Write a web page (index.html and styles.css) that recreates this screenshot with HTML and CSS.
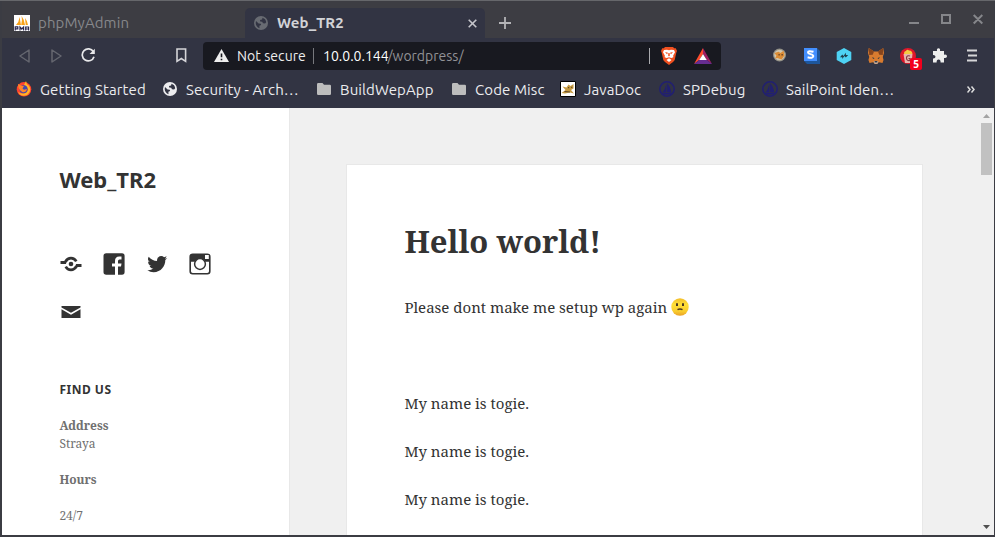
FILE: index.html
```html
<!DOCTYPE html>
<html lang="en">
<head>
<meta charset="utf-8">
<title>Web_TR2</title>
<link rel="stylesheet" href="styles.css">
</head>
<body>
<svg class="defs" width="0" height="0">
  <symbol id="globe" viewBox="0 0 14 14"><circle cx="7" cy="7" r="7" fill="currentColor"/><path class="cut" d="M2 5.1 4.6 7.6 6.8 7.7 7.1 9.1 5.4 9.8 5.5 12.2C3.4 11.6 1.7 9.5 1.7 7ZM8.5 1.8 8.1 3.5 6 4 6.2 5.6 8.2 5.7 9 7.3 11.1 7.4 12.2 6.3C12 4 10.6 2.4 8.5 1.8Z"/></symbol>
  <symbol id="folder" viewBox="0 0 14 12"><path fill="#bdbdbd" d="M1.2 0H5.5L7 1.7H12.8Q14 1.7 14 3V10.8Q14 12 12.8 12H1.2Q0 12 0 10.8V1.2Q0 0 1.2 0Z"/></symbol>
  <symbol id="sail" viewBox="0 0 16 16"><circle cx="8" cy="8" r="7.2" fill="none" stroke="#211f72" stroke-width="1.5"/><path fill="#211f72" d="M7.4 3V11.5H3.4Q6.4 8 7.4 3ZM8.2 2Q11.5 6 12.5 11.5H8.2ZM3 12H13L11.5 13.4H4.5Z"/></symbol>
</svg>
<div class="window">
  <header class="tabs">
    <div class="tab idle">
      <svg width="16" height="16" viewBox="0 0 16 16"><path fill="#fff" d="M0 0H16V16H0Z"/><path fill="#f7a11a" d="M2 10Q5 7 5.6 2L7 10ZM7.2 10Q8.5 5 7.6 1Q10.5 5 11 10ZM11 3Q13.5 6 14 10H11.7Z"/><path fill="none" stroke="#28264f" stroke-width="1.2" d="M1.2 15.5V11.8H3.8V13.8H1.2M6 15.5V12L7.8 14 9.6 12V15.5M11.7 15.5V12H14.6V15.5M11.7 14H14.6"/></svg>
      <span>phpMyAdmin</span>
    </div>
    <div class="tab active">
      <svg class="dim" width="14" height="14"><use href="#globe"/></svg>
      <span>Web_TR2</span>
      <svg class="x" width="9" height="9" viewBox="0 0 9 9"><path stroke="#c6c6cc" stroke-width="1.6" d="M.7.7 8.3 8.3M8.3.7.7 8.3"/></svg>
    </div>
    <svg class="plus" width="12" height="12" viewBox="0 0 12 12"><path stroke="#b4b4b7" stroke-width="1.8" d="M6 0V12M0 6H12"/></svg>
    <svg class="controls" width="75" height="12" viewBox="0 0 75 12"><path fill="none" stroke="#85868a" stroke-width="2" d="M0 9H10M33 1H41V9H33ZM64.7 1 73.3 9.5M73.3 1 64.7 9.5"/></svg>
  </header>
  <nav class="toolbar">
    <svg class="navs" width="44" height="16" viewBox="0 0 44 16"><path fill="none" stroke="#65666f" stroke-width="1.5" stroke-linejoin="round" d="M10 2V14L1 8ZM33 2V14L42 8Z"/></svg>
    <svg class="reload" width="15" height="15" viewBox="0 0 15 15"><path fill="none" stroke="#e8e8ea" stroke-width="1.7" d="M12.4 3.8A6 6 0 1 0 13 8.7"/><path fill="#e8e8ea" d="M13.8.8V6H8.6Z"/></svg>
    <svg class="mark" width="11" height="15" viewBox="0 0 11 15"><path fill="none" stroke="#d5d5d9" stroke-width="1.6" d="M1 1H9.6V13.3L5.3 10.5 1 13.3Z"/></svg>
    <div class="address">
      <svg class="warn" width="15" height="13" viewBox="0 0 15 13"><path fill="#eee" d="M7.5 0 15 13H0Z"/><path stroke="#181920" stroke-width="1.6" d="M7.5 4.5V8.3M7.5 9.7V11.3"/></svg>
      <span class="t-sec">Not secure</span><i class="bar"></i><span class="t-ip">10.0.0.144</span><span class="t-path">/wordpress/</span>
      <i class="bar far"></i>
      <svg class="brave" width="16" height="18" viewBox="0 0 16 18"><path fill="#f0501f" d="M4 0H12L13.2 1.3 14.8 1.2 16 4 15.3 5.8 13.7 13Q13.2 14.3 8 18 2.8 14.3 2.3 13L.7 5.8 0 4 1.2 1.2 2.8 1.3Z"/><path fill="#fff" d="M3 3 6 2.7 8 3.3 10 2.7 13 3 14 5.2 12.2 8.4 12.3 10.2 10.4 11 8 10.2 5.6 11 3.7 10.2 3.8 8.4 2 5.2ZM8 11.3 10.5 13 8 15 5.5 13Z"/><path fill="#f0501f" d="M4 5 7 5.7 6 7.2ZM12 5 9 5.7 10 7.2ZM7.4 6H8.6L8.9 8.6 8 9.6 7.1 8.6Z"/></svg>
      <svg class="bat" width="18" height="16" viewBox="0 0 18 16"><path fill="#ff4c2c" d="M9 0V6L5.2 12 0 16Z"/><path fill="#9e1f63" d="M9 0 18 16 12.8 12 9 6Z"/><path fill="#662d91" d="M0 16 5.2 12H12.8L18 16Z"/><path fill="#fff" d="M9 6 12.8 12H5.2Z"/></svg>
    </div>
    <div class="exts">
      <svg width="16" height="16" viewBox="0 0 16 16"><circle cx="7.5" cy="7" r="6.5" fill="#929087"/><circle cx="7.5" cy="7" r="5.3" fill="#d3c6ac"/><path fill="#db8c35" d="M2.5 5 6.5 3.8 8.5 5 11.5 2.8 12.5 7.5 9.5 11.5 5.5 10 3 10.5 4.5 7.7Z"/><path fill="#653d21" d="M6.5 6H7.7V7.4H6.5ZM9.5 6H10.8V7.4H9.5Z"/></svg>
      <svg width="16" height="16" viewBox="0 0 16 16"><path fill="#1e569b" d="M13 0 16 3V16H3L0 13Z"/><path fill="#438fff" d="M0 0H13V13H0Z"/><path fill="none" stroke="#fff" stroke-width="2" d="M9.5 3.8Q3.8 2.2 4 4.5C4 6.5 9.3 5.7 9.3 8.2Q9 10.7 3.6 9.2"/></svg>
      <svg width="16" height="16" viewBox="0 0 16 16"><path fill="#4ed2f4" d="M8 0 15.3 4V12L8 16 .7 12V4Z"/><path fill="#203d4b" d="M4 9.2 6.3 6.6 7.4 8 10 4.8 9.9 6.9H12.2L9.8 9.5 8.5 8.1 6.2 11 6.3 9.2Z"/></svg>
      <svg width="16" height="16" viewBox="0 0 17 16" preserveAspectRatio="none"><path fill="#d87b2f" d="M.8 0 6.4 3.4H10.6L16.2 0 17 5 15.7 9 16.5 12 15.4 15 11.5 14.3 10 15.8H7L5.5 14.3 1.6 15 .5 12 1.3 9 0 5Z"/><path fill="#87451d" d="M.8 0 6.4 3.4 5 6.7 1.3 7ZM16.2 0 10.6 3.4 12 6.7 15.7 7Z"/><path fill="#d5bfb2" d="M6 13H11L10 15.8H7Z"/><path fill="#303a45" d="M4.5 9 7 10.2 5.4 10.9ZM12.5 9 10 10.2 11.6 10.9ZM7 13H10V14.4H7Z"/></svg>
      <span class="popcorn"><svg width="16" height="16" viewBox="0 0 16 16"><circle cx="8" cy="8" r="8" fill="#df172a"/><path fill="#f4ca42" d="M4 6Q4 3 6 3 7 .7 9 2.5 12 2 12.5 6Z"/><path fill="#e9b5ad" d="M3.5 6H12.5L11.5 15H5Z"/><path fill="none" stroke="#853a43" stroke-width="1.2" d="M10 8Q6.5 7 6.5 10T10 12.5V10.5H8.5"/></svg><b>5</b></span>
      <svg width="16" height="15" viewBox="0 0 16 15"><path fill="#eee" d="M1 3H5Q4.5.3 6.5.3T8 3H12V6.7Q15 6 15 8.3T12 10V14.5H8.6Q8.7 11.5 6.6 11.5T4.6 14.5H1V10.6Q3.5 10.8 3.5 8.8T1 7Z"/></svg>
      <svg class="menu" width="12" height="13" viewBox="0 0 12 13"><path stroke="#d6d6d8" stroke-width="2" d="M1 1.5H11M2 6.5H11M1 11.5H11"/></svg>
    </div>
  </nav>
  <nav class="bookmarks">
    <div class="bm b1"><svg width="16" height="16" viewBox="0 0 16 16"><circle cx="8" cy="8.3" r="7.3" fill="#ff432e"/><path fill="#ffb526" d="M10 0Q10 3 13 4.8 16 10 11.5 13.8 5 16.5 2 11 9 15 12 9 11.5 5 8 4Z"/><circle cx="7.5" cy="8.2" r="4" fill="#404bb0"/><path fill="#ff852a" d="M2 3 5 4.5 8 5.2 6.5 7.5 8 8.7 11 8Q9.8 12 6.2 11 2 8.5 2 3Z"/></svg><span>Getting Started</span></div>
    <div class="bm b2"><svg width="14" height="14"><use href="#globe"/></svg><span>Security - Arch…</span></div>
    <div class="bm b3"><svg width="14" height="12"><use href="#folder"/></svg><span>BuildWepApp</span></div>
    <div class="bm b4"><svg width="14" height="12"><use href="#folder"/></svg><span>Code Misc</span></div>
    <div class="bm b5"><svg width="16" height="16" viewBox="0 0 16 16"><path fill="#fff" stroke="#000" d="M.5.5H15.5V15.5H.5Z"/><path fill="#c79b42" d="M1.5 12 5.5 9 2.5 5.5 6.5 6.5 8.5 3.5 10.5 5 13.5 3 13.5 7.5 11 9 14 12.5 10 11.5 5 12.5Z"/><path fill="#604b2c" d="M8 6H9.2V7.2H8ZM11.2 5.8H12.3V7H11.2ZM5 10 10 10.4V11.4L4 11Z"/></svg><span>JavaDoc</span></div>
    <div class="bm b6"><svg width="16" height="16"><use href="#sail"/></svg><span>SPDebug</span></div>
    <div class="bm b7"><svg width="16" height="16"><use href="#sail"/></svg><span>SailPoint Iden…</span></div>
    <svg class="more" width="8" height="7" viewBox="0 0 8 7"><path fill="none" stroke="#ddd" stroke-width="1.5" d="M.5.5 3 3.5.5 6.5M4.5.5 7 3.5 4.5 6.5"/></svg>
  </nav>
  <div class="page">
    <aside class="side">
      <h1>Web_TR2</h1>
      <div class="social">
        <svg width="24" height="24" viewBox="0 0 24 24"><circle cx="12" cy="12" r="2.3"/><path fill="none" stroke="#333" stroke-width="2.7" d="M6.4 9.7Q8.5 6.2 12 6.2T17.3 9.4M17.6 14.3Q15.5 17.8 12 17.8T6.7 14.6"/><path d="M1.5 9H8.2Q7 10.3 7 12H1.5ZM22.5 12H17Q17 13.7 15.8 15H22.5Z"/></svg>
        <svg width="24" height="24" viewBox="0 0 24 24"><path d="M20 1.3H4.2Q1.5 1.3 1.5 4V20Q1.5 22.7 4.2 22.7H13V14.5H10V11.5H13V9Q13 4.5 17.2 4.5H19.5V7.5H17.5Q16 7.5 16 9V11.5H19.5L19 14.5H16V22.7H20Q22.6 22.7 22.6 20V4Q22.6 1.3 20 1.3Z"/></svg>
        <svg width="24" height="24" viewBox="0 0 24 24"><path d="M22.23 5.92a8.2 8.2 0 0 1-2.36.65 4.1 4.1 0 0 0 1.8-2.27 8.2 8.2 0 0 1-2.6 1A4.1 4.1 0 0 0 12 8a4.1 4.1 0 0 0 .1.94A11.65 11.65 0 0 1 3.7 4.65a4.1 4.1 0 0 0 1.27 5.48 4.1 4.1 0 0 1-1.86-.51v.05a4.1 4.1 0 0 0 3.3 4.02 4.1 4.1 0 0 1-1.86.07 4.1 4.1 0 0 0 3.83 2.85A8.23 8.23 0 0 1 2.32 18.3a11.6 11.6 0 0 0 6.29 1.84c7.55 0 11.68-6.25 11.68-11.67q0-.27-.01-.53a8.3 8.3 0 0 0 1.95-2.02Z"/></svg>
        <svg width="24" height="24" viewBox="0 0 24 24"><rect x="2.2" y="2.2" width="19.6" height="19.6" rx="2.5" fill="none" stroke="#333" stroke-width="1.6"/><path d="M2 3.5Q2.5 2 4 2H20Q22 2 22 4V9.8H2Z"/><circle cx="12" cy="12" r="5.4" fill="#fff" stroke="#333" stroke-width="1.5"/><path fill="#fff" d="M17 3H20.8V7H17Z"/></svg>
        <svg width="24" height="24" viewBox="0 0 24 24"><path d="M2.5 6H21.5V7.4L12 12.7 2.5 7.4ZM2.5 9.3 12 14.7 21.5 9.3V18H2.5Z"/></svg>
      </div>
      <h2>FIND US</h2>
      <p><b>Address</b><br>Straya</p>
      <p><b>Hours</b></p>
      <p>24/7</p>
    </aside>
    <main>
      <article>
        <h2>Hello world!</h2>
        <p class="intro"><span>Please dont make me setup wp again</span><svg width="18" height="18" viewBox="0 0 18 18"><defs><linearGradient id="face" x2="0" y2="1"><stop stop-color="#f3bd29"/><stop offset=".35" stop-color="#ffdf38"/><stop offset=".75" stop-color="#f9cc2d"/><stop offset="1" stop-color="#e9a12a"/></linearGradient></defs><circle cx="9" cy="9" r="8.7" fill="url(#face)"/><path fill="#4c3923" d="M5 5.2H7V8H5ZM11 5.2H13V8H11Z"/><path fill="none" stroke="#4c3923" stroke-width="1.5" d="M6.5 11.6Q9 10.2 11.5 11.6"/></svg></p>
        <p class="gap"></p>
        <p>My name is togie.</p>
        <p>My name is togie.</p>
        <p>My name is togie.</p>
      </article>
    </main>
    <div class="scroll"><i class="up"></i><i class="thumb"></i><i class="down"></i></div>
  </div>
</div>
</body>
</html>
```
FILE: styles.css
```css
* { box-sizing: border-box; }
body { margin: 0; font-family: Ubuntu, "Noto Sans", sans-serif; }
svg { display: block; flex: none; }
.defs { position: absolute; }
.window { width: 995px; height: 537px; overflow: hidden; background: #3b3c43; border-top: 1px solid #66676b; padding: 0 1px 2px 2px; display: flex; flex-direction: column; }
.window span { white-space: nowrap; }
.tabs { height: 37px; flex: none; display: flex; background: #3d3d43; }
.tab { display: flex; height: 30px; margin-top: 7px; align-items: center; font-size: 15px; }
.tab span { padding-bottom: 2px; letter-spacing: .1px; }
.idle { width: 243px; padding-left: 12px; gap: 8px; color: #87888b; }
.active { width: 240px; padding: 0 8px 0 9px; gap: 9px; background: #323443; border-radius: 5px 5px 0 0; color: #d2d3d7; font-weight: 600; }
.active .x { margin-left: auto; }
.dim { color: #686b72; }
.cut { fill: #323443; }
.plus { margin: 16px 0 0 14px; }
.controls { margin: 13px 10px 0 auto; }
.toolbar { height: 35px; flex: none; background: #323443; display: flex; align-items: center; font-size: 14px; }
.navs { margin-left: 17px; }
.reload { margin-left: 18px; }
.mark { margin-left: 80px; }
.address { height: 28px; width: 518px; margin-left: 16px; display: flex; align-items: center; background: #181920; border-radius: 4px; padding-left: 11px; color: #eee; }
.t-sec { width: 69px; margin-left: 8px; letter-spacing: .07px; }
.bar { width: 1px; height: 16px; background: #77787d; margin: 0 9px 0 7px; }
.t-ip { width: 64.4px; color: #fff; }
.t-path { color: #929296; }
.far { margin: 0 11px 0 auto; background: #a9aaae; }
.bat { margin: 0 9px 0 17px; }
.exts { display: flex; align-items: center; margin-left: 51px; gap: 16px; }
.exts .menu { margin-left: 2px; }
.popcorn { position: relative; }
.popcorn b { position: absolute; left: 10px; top: 10px; width: 12px; height: 12px; border-radius: 2px; background: #f2001d; color: #fff; font: bold 10px/12px "Noto Sans", sans-serif; text-align: center; }
.bookmarks { height: 35px; flex: none; background: #323443; color: #ececef; display: flex; align-items: center; padding: 0 19px 3px 14px; font-size: 15px; letter-spacing: .1px; }
.bm { display: flex; align-items: center; gap: 8px; flex: none; }
.b1 { width: 147px; }
.b2 { width: 152px; gap: 9px; }
.b3 { width: 135px; gap: 9px; padding-left: 2px; }
.b4 { width: 110px; gap: 9px; padding-left: 2px; }
.b5 { width: 99px; }
.b6 { width: 103px; }
.b7 { width: 150px; }
.more { margin-left: auto; }
.page { flex: 1; min-height: 0; display: flex; background: #f0f0f0; }
.side { width: 288px; flex: none; background: #fff; border-right: 1px solid #e8e8e8; padding: 55px 57px 0 57.4px; overflow: hidden; color: #707070; }
.side h1 { margin: 0; font: bold 22px/32px "Noto Sans", sans-serif; color: #333; }
.social { margin-top: 57px; display: flex; flex-wrap: wrap; gap: 24px 19px; fill: #333; }
.side h2 { margin: 57px 0 18px; font: bold 12px/18px "Noto Sans", sans-serif; letter-spacing: .5px; color: #333; }
.side p { margin: 0 0 18px; font: 12px/18px "Noto Serif", "DejaVu Serif Condensed", "DejaVu Serif", serif; }
main { width: 691px; flex: none; padding: 56px 58px 0 56px; overflow: hidden; }
article { width: 577px; height: 500px; background: #fff; border: 1px solid #e8e8e8; padding: 52px 57px 0 57.4px; color: #333; font: 15px/24px "Noto Serif", "DejaVu Serif Condensed", "DejaVu Serif", serif; }
article h2 { margin: 0 0 30px; font-size: 31px; line-height: 48px; }
article p { margin: 0 0 24px; height: 24px; }
.intro { display: flex; gap: 4px; align-items: center; }
.scroll { flex: 1; display: flex; flex-direction: column; align-items: center; padding: 6px 2px 6px 0; }
.up, .down { width: 7px; height: 4px; background: #a3a3a3; clip-path: polygon(50% 0, 100% 100%, 0 100%); }
.thumb { width: 11px; height: 52px; background: #c1c1c1; margin-top: 5px; }
.down { margin-top: auto; background: #505050; clip-path: polygon(0 0, 100% 0, 50% 100%); }
```
